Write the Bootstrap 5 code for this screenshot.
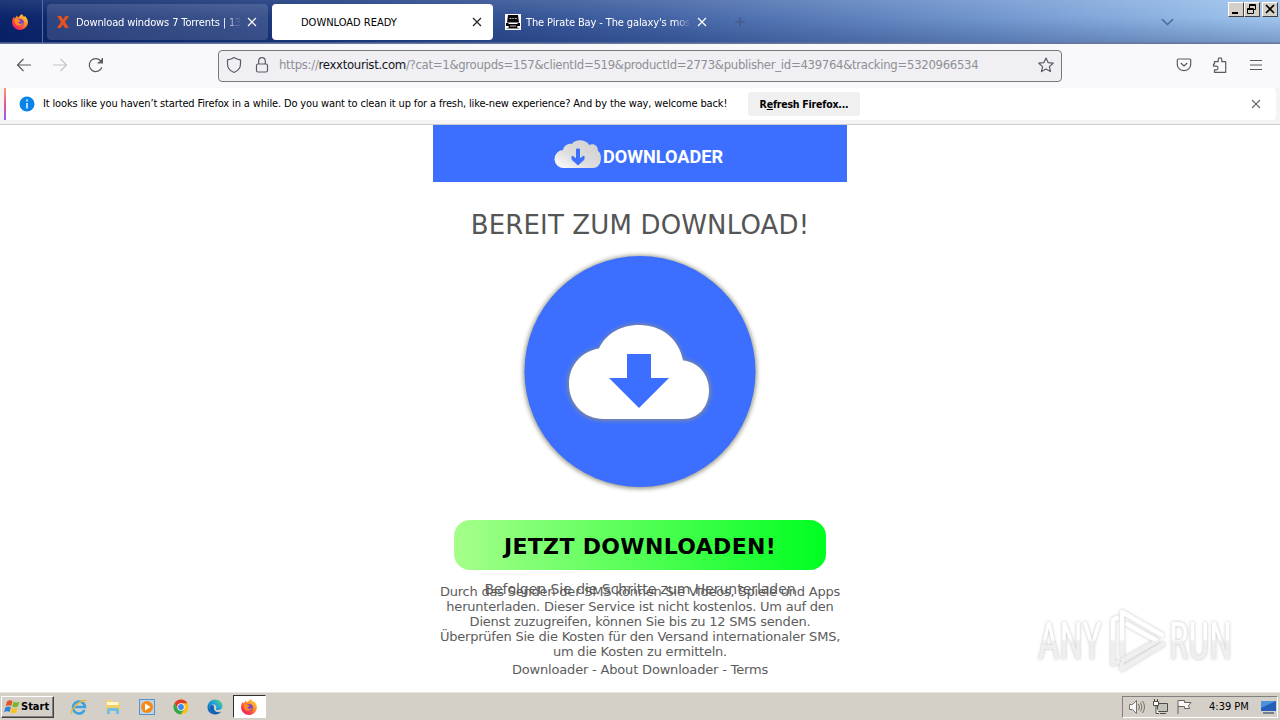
<!DOCTYPE html>
<html lang="de">
<head>
  <meta charset="UTF-8" />
  <title>DOWNLOAD READY</title>
  <link href="https://cdn.jsdelivr.net/npm/bootstrap@5.3.3/dist/css/bootstrap.min.css" rel="stylesheet">
  <style>
    body { width: 1280px; height: 720px; overflow: hidden; font-family: "DejaVu Sans Condensed", "DejaVu Sans", sans-serif; font-stretch: condensed; font-size: 11px; color: #000; background: #fff; }
    svg { display: block; flex-shrink: 0; }
    .line { white-space: nowrap; line-height: 16px; }

    /* tab strip */
    .tabstrip { height: 44px; background: linear-gradient(180deg, rgba(255,255,255,.1), rgba(255,255,255,0) 40%, rgba(0,20,80,.24) 96%, #66779b 97%), linear-gradient(90deg, #0a246a, #203d80 25%, #4565a6 52%, #7398d0 78%, #a0c6ee); }
    .fx-view { width: 43px; height: 43px; border-right: 1px solid #58709f; padding: 14px 0 0 12px; }
    .tab { width: 221px; height: 36px; margin: 4px 0 0 4px; border-radius: 4px; color: #fff; }
    .tab-bg { background: rgba(255,255,255,.14); }
    .tab-on { background: #fff; color: #000; }
    .tab-text { width: 165px; overflow: hidden; padding-top: 2px; }
    .fade-end { letter-spacing: -.12px; -webkit-mask-image: linear-gradient(90deg, #000 90%, transparent); mask-image: linear-gradient(90deg, #000 90%, transparent); }
    .winbtn { width: 16px; height: 15px; background: #d4d0c8; border: 1px solid; border-color: #fff #404040 #404040 #fff; }

    /* toolbar */
    .toolbar { height: 44px; background: #f9f9fb; padding-bottom: 2px; }
    .urlbar { width: 844px; height: 32px; margin: 0 0 -2px 114px; border: 1px solid #77777d; border-radius: 4px; background: #f0f0f4; padding-bottom: 2px; }
    .url { font-size: 13px; color: #8f8f94; letter-spacing: -.3px; margin-left: 10px; }
    .url b { font-weight: 400; color: #15141a; }

    /* notification */
    .notice { height: 37px; background: #f4f4f6; border-bottom: 1px solid #ccc; padding: 0 4px 4px; }
    .notice-in { height: 32px; background: #fff; border-radius: 4px; }
    .notice-text { width: 705px; margin-left: 8px; letter-spacing: -.147px; }
    .notice-bar { width: 2px; height: 32px; background: linear-gradient(#ff9a6b, #e65a8c 50%, #9059ff); }
    .refresh { width: 112px; height: 24px; background: #f0f0f1; border-radius: 4px; font-weight: 700; font-size: 10.5px; letter-spacing: -.22px; }

    /* page */
    .page { height: 567px; font-family: "DejaVu Sans", sans-serif; font-stretch: normal; color: #5c5c5c; }
    .col-main { width: 414px; }
    .banner { height: 57px; background: #3c6fff; }
    .heading { font-size: 26px; line-height: 32px; margin-top: 27px; white-space: nowrap; letter-spacing: .15px; color: #555; }
    .bigicon { margin: 4px 0 0 82px; }
    .go { width: 372px; height: 50px; margin: 23px 0 0 21px; padding-top: 2px; border-radius: 16px; background: linear-gradient(90deg, #a5ff8a, #00ff21); color: #000; font-size: 22px; font-weight: 700; letter-spacing: .33px; }
    .steps { font-size: 14px; line-height: 16px; margin-top: 11px; white-space: nowrap; letter-spacing: -.04px; }
    .legal { font-size: 13px; line-height: 15px; margin-top: -13px; white-space: nowrap; letter-spacing: -.215px; }
    .links { font-size: 13px; line-height: 15px; margin-top: 3px; white-space: nowrap; letter-spacing: -.18px; }
    .anyrun { left: 1030px; top: 600px; }

    /* taskbar */
    .taskbar { height: 28px; background: #d4d0c8; border-top: 1px solid #e9e7e2; }
    .start { width: 53px; height: 22px; margin-left: 1px; border: 1px solid; border-color: #fff #404040 #404040 #fff; box-shadow: inset -1px -1px #808080; font-weight: 700; padding-left: 2px; }
    .app-on { width: 33px; height: 23px; background: #fff; border: 1px solid; border-color: #303030 #fff #fff #303030; padding: 3px 0 0 7px; }
    .tray { width: 156px; height: 22px; border: 1px solid; border-color: #808080 #fff #fff #808080; }
  </style>
</head>
<body>
  <svg width="0" height="0" class="position-absolute">
    <defs>
      <linearGradient id="flame" x1="1" y1="0" x2="0.1" y2="1"><stop offset="0" stop-color="#fff04a"/><stop offset=".4" stop-color="#ff9225"/><stop offset=".75" stop-color="#ff3647"/><stop offset="1" stop-color="#e61587"/></linearGradient>
      <linearGradient id="edge" x1="0" y1="1" x2="1" y2="0"><stop offset="0" stop-color="#0b4fa5"/><stop offset=".55" stop-color="#1a9de0"/><stop offset="1" stop-color="#5fdc6c"/></linearGradient>
      <linearGradient id="silver" x1="1" y1="0" x2="0" y2="1"><stop offset="0" stop-color="#cfcfcf"/><stop offset=".6" stop-color="#dedede"/><stop offset="1" stop-color="#fff"/></linearGradient>
      <symbol id="firefox" viewBox="0 0 16 16">
        <path d="M8 1.600C9 .8 9.600.5 9.800 0c.8 1 1.600 1.800 2.200 3l1-1c1.800 2 3 4 2.900 6.600C15.600 13 12 16 8 16S.2 12.800.1 8.500C0 6.200.8 4 2 2.800l.6 1.700C3.600 3.300 4.300 3 4.700 1.500L6.200 3.600z" fill="url(#flame)"/>
        <circle cx="8.100" cy="8.600" r="3.700" fill="#7a3fd0"/>
        <path d="M2.600 5.200c1.700-.7 3-.2 4.200.8l2 .5c-.2 1.200-2.300 1.200-2.400 2.200 1 1.700 3.300 1.200 4.600.3-.4 3-4.900 3.900-7.100 1.400C2.700 9 2.200 7 2.600 5.200z" fill="#ff8a1e"/>
      </symbol>
    </defs>
  </svg>

  <div class="tabstrip d-flex">
    <div class="fx-view"><svg width="16" height="16"><use href="#firefox"/></svg></div>
    <div class="tab tab-bg d-flex align-items-center">
      <svg class="ms-2" width="16" height="16" viewBox="0 0 16 16"><path d="M2 2h4l2 3.500L10.500 2H14l-4 6 4 6h-4l-2.200-3.500L5.600 14H2l4-6z" fill="#e8501e"/></svg>
      <div class="tab-text line fade-end" style="margin-left:5px">Download windows 7 Torrents | 1337x</div>
      <svg width="18" height="18" viewBox="0 0 18 18" style="margin-left:2px"><path d="M5 5l8 8M13 5l-8 8" stroke="#fff" stroke-width="1.200"/></svg>
    </div>
    <div class="tab tab-on d-flex align-items-center">
      <div class="tab-text line" style="margin-left:29px">DOWNLOAD READY</div>
      <svg width="18" height="18" viewBox="0 0 18 18" style="margin-left:2px"><path d="M5 5l8 8M13 5l-8 8" stroke="#222" stroke-width="1.200"/></svg>
    </div>
    <div class="tab d-flex align-items-center">
      <svg class="ms-2" width="16" height="16" viewBox="0 0 16 16"><path d="M0 0h16v16H0z" fill="#fff"/><path d="M3 1h10l1 7.500H2zM1 9h2l1 1h8l1-1h2v3h-2.500l-.5 1.500 3 1H1l3-1L3.500 12H1z" fill="#080808"/><path d="M4.500 4h2v1h-2zm2.800 0h1.500v1H7.300zm2.500 0h2v1h-2zM5 11.500h6v1H5z" fill="#bbb"/></svg>
      <div class="tab-text line fade-end" style="margin-left:5px">The Pirate Bay - The galaxy's most resilient</div>
      <svg width="18" height="18" viewBox="0 0 18 18" style="margin-left:2px"><path d="M5 5l8 8M13 5l-8 8" stroke="#fff" stroke-width="1.200"/></svg>
    </div>
    <svg width="16" height="16" viewBox="0 0 16 16" style="margin:14px 0 0 14px"><path d="M8 3v10M3 8h10" stroke="#46557c" stroke-width="1.200"/></svg>
    <svg class="ms-auto" width="16" height="16" viewBox="0 0 16 16" style="margin:14px 53px 0 0"><path d="M3 5.200l5.500 5.300L14 5.200" fill="none" stroke="#47679d" stroke-width="1.500"/></svg>
    <div class="d-flex" style="margin:2px 2px 0 0">
      <div class="winbtn"><svg width="14" height="13"><path d="M3 9h6v2H3z"/></svg></div>
      <div class="winbtn"><svg width="14" height="13" fill="none" stroke="#000"><path d="M4.500 5V1.500h6v5H8M4 2.500h7M2.500 5.500h6v5h-6zM2 6.500h7"/></svg></div>
      <div class="winbtn" style="margin-left:2px"><svg width="14" height="13"><path d="M3 2l8 8M11 2l-8 8" stroke="#000" stroke-width="1.700"/></svg></div>
    </div>
  </div>

  <div class="toolbar d-flex align-items-center">
    <svg width="16" height="16" viewBox="0 0 16 16" fill="none" stroke="#5b5b62" stroke-width="1.200" style="margin-left:16px"><path d="M15 8H1.500M7.500 2L1.500 8l6 6"/></svg>
    <svg width="16" height="16" viewBox="0 0 16 16" fill="none" stroke="#c4c4c8" stroke-width="1.200" style="margin-left:20px"><path d="M1 8h13.500M8.500 2l6 6-6 6"/></svg>
    <svg width="16" height="16" viewBox="0 0 16 16" fill="none" stroke="#5b5b62" stroke-width="1.200" style="margin-left:20px"><path d="M13.900 10.200A6.500 6.500 0 1 1 13 4.200M14.400 1v4.800H9.600"/><path d="M14.400 1.500v4.300h-4.300z" fill="#5b5b62" stroke="none"/></svg>
    <div class="urlbar d-flex align-items-center">
      <svg width="16" height="18" viewBox="0 0 16 18" fill="none" stroke="#5b5b62" stroke-width="1.200" style="margin-left:7px"><path d="M8 1.500c2 1.500 4 2 6.500 2.300V8c0 4-2.800 7-6.500 8.500C4.300 15 1.500 12 1.500 8V3.800C4 3.500 6 3 8 1.500z" stroke-linejoin="round"/></svg>
      <svg width="14" height="18" viewBox="0 0 14 18" fill="none" stroke="#5b5b62" stroke-width="1.200" style="margin-left:13px"><rect x="1.500" y="8" width="11" height="8" rx="1.500"/><path d="M3.700 8V5a3.300 3.300 0 0 1 6.600 0v3"/></svg>
      <div class="url line">https://<b>rexxtourist.com</b>/?cat=1&amp;groupds=157&amp;clientId=519&amp;productId=2773&amp;publisher_id=439764&amp;tracking=5320966534</div>
      <svg class="ms-auto" width="16" height="16" viewBox="0 0 16 16" fill="none" stroke="#5b5b62" stroke-width="1.200" stroke-linejoin="round" style="margin-right:7px"><path d="M8 1l2.100 4.600 5.100.6-3.800 3.400 1.100 5L8 12.100l-4.500 2.500 1.100-5L.8 6.200l5.100-.6z"/></svg>
    </div>
    <svg class="ms-auto" width="16" height="16" viewBox="0 0 16 16" fill="none" stroke="#5b5b62" stroke-width="1.200" stroke-linecap="round" stroke-linejoin="round" style="margin-right:20px"><path d="M2.500 2h11a1.200 1.200 0 0 1 1.200 1.200V7.500a6.700 6.200 0 0 1-13.400 0V3.200A1.200 1.200 0 0 1 2.500 2zM5 6.300l3 2.700 3-2.700"/></svg>
    <svg width="16" height="16" viewBox="0 0 16 16" fill="none" stroke="#5b5b62" stroke-width="1.200" stroke-linejoin="round" style="margin-right:20px"><path d="M2.500 7V4.700h3.700V2.600a1.800 1.800 0 0 1 3.600 0v2.100h3.900v10.600H2.500v-2.500h1.700a1.700 1.700 0 0 0 0-3.600H1.500V7z"/></svg>
    <svg width="16" height="16" viewBox="0 0 16 16" stroke="#5b5b62" stroke-width="1.200" style="margin-right:16px"><path d="M2 3.500h12M2 8h12M2 12.500h12"/></svg>
  </div>

  <div class="notice">
    <div class="notice-in d-flex align-items-center">
      <div class="notice-bar"></div>
      <svg width="16" height="16" viewBox="0 0 16 16" style="margin-left:13px"><circle cx="8" cy="8" r="7.500" fill="#0a84e8"/><path d="M8 3.500v2M8 7v5.500" stroke="#fff" stroke-width="1.400"/></svg>
      <div class="line notice-text">It looks like you haven’t started Firefox in a while. Do you want to clean it up for a fresh, like-new experience? And by the way, welcome back!</div>
      <div class="refresh d-flex align-items-center justify-content-center line"><span>R<u>e</u>fresh Firefox...</span></div>
      <svg class="ms-auto" width="16" height="16" viewBox="0 0 16 16" style="margin-right:12px"><path d="M4 4l8 8M12 4l-8 8" stroke="#6b6b72" stroke-width="1.100"/></svg>
    </div>
  </div>

  <div class="page">
    <div class="col-main mx-auto text-center">
      <div class="banner">
        <svg width="414" height="57">
          <path d="M131 43a9 9 0 0 1-1-18c1-5 6-7 9-6 3-5 14-5 17 1 5-2 9 1 9 6 5 3 4 17-5 17z" fill="url(#silver)"/>
          <path d="M143.500 24h3v10l4.500-3v3.500l-6 5.500-6-5.500V31l4.500 3z" fill="#3c6fff" stroke="#3c6fff"/>
          <text x="170" y="37.800" textLength="120" lengthAdjust="spacingAndGlyphs" font-family="Roboto" font-weight="700" font-size="19" fill="#fff">DOWNLOADER</text>
        </svg>
      </div>
      <div class="heading">BEREIT ZUM DOWNLOAD!</div>
      <svg class="bigicon" width="250" height="252" viewBox="515 245 250 252">
        <defs><filter id="soft" x="-10%" y="-10%" width="120%" height="120%"><feGaussianBlur stdDeviation="2"/></filter></defs>
        <circle cx="640" cy="372" r="117" fill="#6b6b55" opacity=".65" filter="url(#soft)"/>
        <circle cx="640" cy="371.500" r="115.500" fill="#3c6fff"/>
        <path d="M603 420c-20 0-35-15-35-36 0-20 14-33 31-35.500 7-15 22-24 40-24 23 0 40 14 44 35.500 14 1 27 13 27 30 0 18-11 30-27 30z" fill="#99937a" stroke="#99937a" opacity=".8" filter="url(#soft)"/>
        <path d="M604 419c-20 0-35-15-35-35 0-20 14-33 30-35.500 7-15 22-23.500 40-23.500 23 0 40 14 44 35.500 14 1 26 13 26 29.500 0 17-11 29-26 29z" fill="#fff"/>
        <path d="M627 354h24v24h18l-30 30-30-30h18z" fill="#3c6fff"/>
      </svg>
      <div class="go d-flex align-items-center justify-content-center"><span>JETZT DOWNLOADEN!</span></div>
      <div class="steps">Befolgen Sie die Schritte zum Herunterladen</div>
      <div class="legal">Durch das Senden der SMS können Sie Videos, Spiele und Apps<br>herunterladen. Dieser Service ist nicht kostenlos. Um auf den<br>Dienst zuzugreifen, können Sie bis zu 12 SMS senden.<br>Überprüfen Sie die Kosten für den Versand internationaler SMS,<br>um die Kosten zu ermitteln.</div>
      <div class="links">Downloader - About Downloader - Terms</div>
    </div>
  </div>

  <div class="taskbar d-flex align-items-center">
    <div class="start d-flex align-items-center">
      <svg width="17" height="16" viewBox="0 0 17 16"><path d="M3 2.500c2-1.500 3.500-1.500 5.500-.3L7.200 7C5.500 6 4 6 1.700 7.200z" fill="#e8502a"/><path d="M9.500 2.800c2 1 3.500 1 6 0L14 7.500c-2.300 1-4 1-5.800 0z" fill="#76b82a"/><path d="M1.400 8.400C3.500 7.200 5 7.200 6.900 8.200L5.600 13C4 12 2.200 12 0 13.200z" fill="#3183d8"/><path d="M7.900 8.700c2 1 3.600 1 5.800 0L12.300 13.500c-2.200 1-4 1-5.700 0z" fill="#f8c31c"/></svg>
      <span class="line">Start</span>
    </div>
    <svg width="18" height="18" viewBox="0 0 18 18" style="margin-left:16px"><path d="M14.500 12a6 6 0 1 1 .5-3H5" fill="none" stroke="#39a2e2" stroke-width="2.500"/><path d="M2 15.500C-.5 13 9 1.500 16.500 2.500" fill="none" stroke="#edb62d" stroke-width="1.400"/></svg>
    <svg width="18" height="18" viewBox="0 0 18 18" style="margin-left:16px"><path d="M2 2h6l1 2h7v9H2z" fill="#f3d67a"/><path d="M3 4h11v3H3z" fill="#fff6d0"/><path d="M2 7h14v6H2z" fill="#f0cf69"/><path d="M3 16v-4q0-2 2-2h8q2 0 2 2v4h-3v-3H6v3z" fill="#70bde6"/></svg>
    <svg width="18" height="18" viewBox="0 0 18 18" style="margin-left:16px"><rect x="1.500" y="1.500" width="15" height="15" fill="#b9d5ee" stroke="#5b91c4"/><circle cx="9" cy="9" r="6" fill="#f58a14"/><path d="M7 5.500l5.500 3.500L7 12.500z" fill="#fff"/></svg>
    <svg width="18" height="18" viewBox="0 0 18 18" style="margin-left:16px"><circle cx="9" cy="9" r="7.500" fill="#fbc116"/><path d="M2.500 5.200A7.500 7.500 0 0 1 15.500 5.200H9L5.700 10.900z" fill="#e33b2e"/><path d="M2.500 5.200A7.500 7.500 0 0 0 8.600 16.500l3.700-5.600H5.700z" fill="#2da94f"/><circle cx="9" cy="9" r="3.700" fill="#fff"/><circle cx="9" cy="9" r="2.900" fill="#4285f4"/></svg>
    <svg width="18" height="18" viewBox="0 0 18 18" style="margin-left:16px"><path d="M1.500 9.500C1.500 5 5 1.500 9.200 1.500c4.300 0 7.300 3 7.300 6.500 0 2.500-2 4-4.500 4-1.500 0-2.500-.6-2-1.300C11.500 8 8.500 5.500 5.500 7 2.500 8.500 3.500 15 9 16.500 4.800 16.500 1.500 13.500 1.500 9.500z" fill="url(#edge)"/><path d="M5.500 7C2.500 9 3.500 15.500 9.200 16.500c2.500 0 4.800-1.200 6-3C11 15.500 7 12.500 8 8.500 7.500 7 6.500 6.700 5.500 7z" fill="#1160b4"/></svg>
    <div class="app-on" style="margin-left:9px"><svg width="16" height="16"><use href="#firefox"/></svg></div>
    <div class="tray d-flex align-items-center ms-auto me-1">
      <svg width="18" height="16" viewBox="0 0 18 16" fill="none" stroke="#77736c" style="margin-left:5px"><path d="M1.500 5.500h3l4-4v13l-4-4h-3z" fill="#f8f8f8"/><path d="M10.500 5q2 3 0 6M12.500 3.500q3 4.500 0 9M14.500 2q4 6 0 12"/></svg>
      <svg width="17" height="16" viewBox="0 0 17 16" style="margin-left:6px" fill="none" stroke="#4f4c48"><path d="M5.500 4.500h10v8h-10zM8 14.500h6" fill="#c4c1ba"/><path d="M1.500 2.500h5v4h-5zM2.500 0v2M5.500 0v2M4 7v7.500h3" fill="#fff"/></svg>
      <svg width="17" height="16" viewBox="0 0 17 16" style="margin-left:7px" fill="#f8f8f8" stroke="#66625d"><path d="M2 15V1.500h6.500v2H15l-2.500 3 1 3H8.500v-2H2"/></svg>
      <div class="line" style="margin-left:16px">4:39 PM</div>
    </div>
    <svg width="16" height="16" viewBox="0 0 16 16" style="margin-left:-22px;margin-right:4px"><path d="M1 2h15v10H1z" fill="#245fb8"/><path d="M1 2h15L1 9z" fill="#4c92df"/><path d="M3 13h11v2H3z" fill="#747f94"/></svg>
  </div>

  <svg class="anyrun position-absolute" width="220" height="85" viewBox="1030 600 220 85">
    <defs>
      <linearGradient id="wm" gradientUnits="userSpaceOnUse" x1="0" y1="610" x2="0" y2="670"><stop offset=".48" stop-color="#fff"/><stop offset=".53" stop-color="#efefef"/></linearGradient>
      <filter id="glow" x="-10%" y="-10%" width="120%" height="120%"><feDropShadow dx="0" dy="0" stdDeviation="1.800" flood-color="#777" flood-opacity=".5"/></filter>
    </defs>
    <g filter="url(#glow)" fill="url(#wm)" font-family="Roboto" font-size="51">
      <text x="1038" y="659" textLength="64" lengthAdjust="spacingAndGlyphs">ANY</text>
      <text x="1169" y="659" textLength="63" lengthAdjust="spacingAndGlyphs">RUN</text>
      <g fill="none" stroke="url(#wm)" stroke-width="4.500" stroke-linecap="round" stroke-linejoin="round">
        <path d="M1117 618l-4 2v44l5-2M1122 655v-43l40 23M1127 624l30 17-34 19M1163 644l-41 25v-5"/>
      </g>
    </g>
  </svg>

  <script src="https://cdn.jsdelivr.net/npm/bootstrap@5.3.3/dist/js/bootstrap.bundle.min.js"></script>
</body>
</html>
